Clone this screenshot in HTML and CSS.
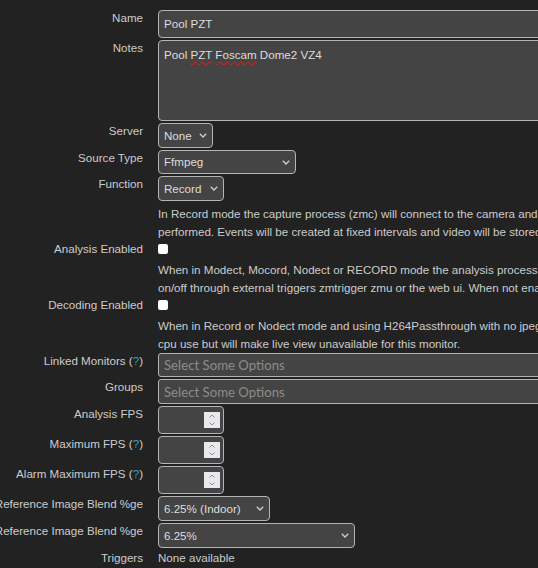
FILE: index.html
```html
<!DOCTYPE html>
<html>
<head>
<meta charset="utf-8">
<link rel="stylesheet" href="styles.css">
</head>
<body>
<div class="form">
  <div class="row">
    <div class="label">Name</div>
    <div class="value"><div class="box wide h28"><span>Pool PZT</span></div></div>
  </div>
  <div class="row">
    <div class="label">Notes</div>
    <div class="value"><div class="box wide notes"><span>Pool <span class="sp">PZT</span> <span class="sp">Foscam</span> Dome2 VZ4</span></div></div>
  </div>
  <div class="row">
    <div class="label">Server</div>
    <div class="value"><div class="box select w-server h25"><span>None</span><svg class="chev" width="8" height="5" viewBox="0 0 8 5"><polyline points="0.8,0.8 4,4 7.2,0.8"/></svg></div></div>
  </div>
  <div class="row">
    <div class="label">Source Type</div>
    <div class="value"><div class="box select w-source h24"><span>Ffmpeg</span><svg class="chev" width="8" height="5" viewBox="0 0 8 5"><polyline points="0.8,0.8 4,4 7.2,0.8"/></svg></div></div>
  </div>
  <div class="row flush">
    <div class="label">Function</div>
    <div class="value">
      <div class="box select w-func h25"><span>Record</span><svg class="chev" width="8" height="5" viewBox="0 0 8 5"><polyline points="0.8,0.8 4,4 7.2,0.8"/></svg></div>
      <div class="help first">In Record mode the capture process (zmc) will connect to the camera and stream data. It will be decoded if necessary and recorded. Motion detection will not be<br>performed. Events will be created at fixed intervals and video will be stored to disk.</div>
    </div>
  </div>
  <div class="row flush">
    <div class="label">Analysis Enabled</div>
    <div class="value">
      <div class="checkline"><span class="check"></span></div>
      <div class="help">When in Modect, Mocord, Nodect or RECORD mode the analysis process can be turned<br>on/off through external triggers zmtrigger zmu or the web ui. When not enabled no motion detection or linked monitor checking will be performed.</div>
    </div>
  </div>
  <div class="row flush">
    <div class="label">Decoding Enabled</div>
    <div class="value">
      <div class="checkline"><span class="check"></span></div>
      <div class="help">When in Record or Nodect mode and using H264Passthrough with no jpegs being saved, we can optionally choose to not decode the H264/H265 packets. This will drastically reduce<br>cpu use but will make live view unavailable for this monitor.</div>
    </div>
  </div>
  <div class="row">
    <div class="label">Linked Monitors (<a class="q">?</a>)</div>
    <div class="value"><div class="box chosen wide h24"><span>Select Some Options</span></div></div>
  </div>
  <div class="row">
    <div class="label">Groups</div>
    <div class="value"><div class="box chosen wide h25"><span>Select Some Options</span></div></div>
  </div>
  <div class="row">
    <div class="label">Analysis FPS</div>
    <div class="value"><div class="box num h28"><span class="spin"><svg width="16" height="16" viewBox="0 0 16 16"><polyline points="5.5,5.5 8,3 10.5,5.5"/><polyline points="5.5,10.5 8,13 10.5,10.5"/></svg></span></div></div>
  </div>
  <div class="row">
    <div class="label">Maximum FPS (<a class="q">?</a>)</div>
    <div class="value"><div class="box num h28"><span class="spin"><svg width="16" height="16" viewBox="0 0 16 16"><polyline points="5.5,5.5 8,3 10.5,5.5"/><polyline points="5.5,10.5 8,13 10.5,10.5"/></svg></span></div></div>
  </div>
  <div class="row">
    <div class="label">Alarm Maximum FPS (<a class="q">?</a>)</div>
    <div class="value"><div class="box num h28"><span class="spin"><svg width="16" height="16" viewBox="0 0 16 16"><polyline points="5.5,5.5 8,3 10.5,5.5"/><polyline points="5.5,10.5 8,13 10.5,10.5"/></svg></span></div></div>
  </div>
  <div class="row">
    <div class="label">Reference Image Blend %ge</div>
    <div class="value"><div class="box select w-ref1 h25"><span>6.25% (Indoor)</span><svg class="chev" width="8" height="5" viewBox="0 0 8 5"><polyline points="0.8,0.8 4,4 7.2,0.8"/></svg></div></div>
  </div>
  <div class="row">
    <div class="label">Reference Image Blend %ge</div>
    <div class="value"><div class="box select w-ref2 h25"><span>6.25%</span><svg class="chev" width="8" height="5" viewBox="0 0 8 5"><polyline points="0.8,0.8 4,4 7.2,0.8"/></svg></div></div>
  </div>
  <div class="row">
    <div class="label">Triggers</div>
    <div class="value"><div class="text">None available</div></div>
  </div>
</div>
</body>
</html>
```
FILE: styles.css
```css
html {
  overflow: hidden;
  background: #222222;
}
body {
  margin: 0;
  padding-top: 10px;
  background: #222222;
  color: #cccccc;
  font-family: "Liberation Sans", Arial, sans-serif;
  font-size: 11.6px;
  line-height: 16px;
}
.form {
  display: flex;
  flex-direction: column;
}
.row {
  display: grid;
  grid-template-columns: 143px minmax(0, 1fr);
  column-gap: 15px;
  align-items: start;
  margin-bottom: 2px;
}
.row.flush {
  margin-bottom: 0;
}
.label {
  display: flex;
  justify-content: flex-end;
  white-space: nowrap;
  color: #cccccc;
}
.q {
  color: #3a9ad6;
}
.value {
  min-width: 0;
}
.box {
  box-sizing: border-box;
  display: flex;
  align-items: center;
  border: 1px solid #b4b4b4;
  border-radius: 4px;
  background: #444444;
  color: #dddddd;
  padding: 0 5px;
  white-space: nowrap;
}
.wide { width: 430px; }
.h24 { height: 24px; }
.h25 { height: 25px; }
.h28 { height: 28px; }
.notes {
  height: 81px;
  align-items: flex-start;
  padding-top: 6px;
}
.sp {
  text-decoration: underline wavy #e02020;
  text-decoration-thickness: 1px;
  text-underline-offset: 2px;
  text-decoration-skip-ink: none;
}
.select {
  justify-content: space-between;
  padding-right: 5px;
}
.chev {
  flex: none;
  fill: none;
  stroke: #cfcfcf;
  stroke-width: 1.3;
}
.w-server { width: 55px; }
.w-source { width: 138px; }
.w-func { width: 66px; }
.w-ref1 { width: 112px; }
.w-ref2 { width: 197px; }
.chosen {
  border-radius: 3px;
  color: #8c8c8c;
  font-family: Lato, "Open Sans", sans-serif;
  font-size: 13.2px;
}
.num {
  width: 66px;
  justify-content: flex-end;
  padding-right: 3px;
}
.spin {
  display: block;
  width: 16px;
  height: 16px;
  background: #e9e9ed;
}
.spin svg {
  display: block;
  fill: none;
  stroke: #8a8a90;
  stroke-width: 1;
}
.help {
  margin-top: 4px;
  line-height: 18px;
  white-space: nowrap;
  color: #cccccc;
}
.checkline {
  height: 16px;
  display: flex;
  align-items: center;
}
.check {
  display: block;
  width: 10px;
  height: 10px;
  border-radius: 2px;
  background: #ffffff;
}
.text {
  color: #cccccc;
}
```
